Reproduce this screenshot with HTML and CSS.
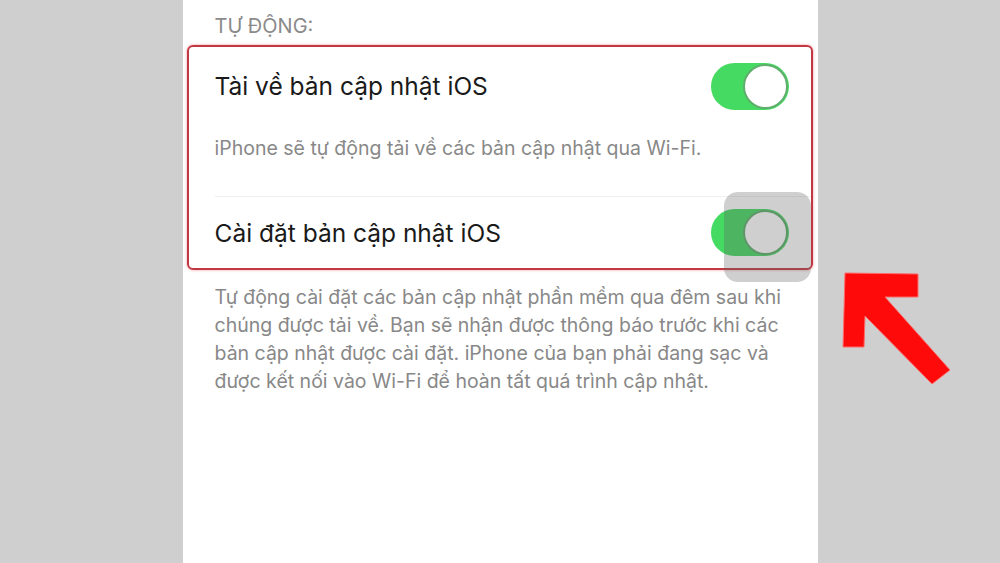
FILE: index.html
```html
<!DOCTYPE html>
<html lang="vi">
<head>
  <meta charset="utf-8">
  <meta name="viewport" content="width=device-width, initial-scale=1.0">
  <title>Cập nhật phần mềm</title>
  <link rel="stylesheet" href="styles.css">
</head>
<body>
    <div class="screen">
        <p class="section-header">TỰ ĐỘNG:</p>
        <div class="group highlight">
            <div class="row">
                <span class="row-title">Tài về bản cập nhật iOS</span>
                <div class="switch on"><div class="knob"></div></div>
            </div>
            <p class="row-note">iPhone sẽ tự động tải về các bản cập nhật qua Wi-Fi.</p>
            <div class="separator"></div>
            <div class="row">
                <span class="row-title">Cài đặt bản cập nhật iOS</span>
                <div class="switch on pressed"><div class="knob"></div></div>
            </div>
        </div>
        <p class="section-footer">Tự động cài đặt các bản cập nhật phần mềm qua đêm sau khi chúng được tải về. Bạn sẽ nhận được thông báo trước khi các bản cập nhật được cài đặt. iPhone của bạn phải đang sạc và được kết nối vào Wi-Fi để hoàn tất quá trình cập nhật.</p>
    </div>

    <!-- pointer arrow next to the screen -->
    <svg class="arrow" width="120" height="120" viewBox="0 0 120 120">
        <polygon points="5,3 78,4 78,27 45,27 110,100 92,114 25,46 24,77 3,77"
                 fill="#ff0a0a" stroke="#ff6b6b" stroke-width="1"/>
    </svg>
</body>
</html>
```

FILE: styles.css
```css
* {
    box-sizing: border-box;
}
body {
    margin: 0;
    height: 563px;
    overflow: hidden;
    background-color: #cfcfcf;
    font-family: "Inter", "Liberation Sans", sans-serif;
}
p {
    margin: 0;
}
.screen {
    width: 635px;
    height: 563px;
    margin: 0 auto;
    background-color: #fff;
}

/* Section text */
.section-header {
    padding: 15px 0 0 32px;
    font-size: 20px;
    line-height: 22px;
    color: #8a8a8a;
    margin-bottom: 8px;
}
.section-footer {
    margin-top: 13px;
    padding: 0 22px 0 32px;
    font-size: 19.5px;
    line-height: 28px;
    color: #888;
}

/* Grouped rows */
.group {
    margin: 0 5px 0 4px;
}
.highlight {
    border: 2px solid #c23842;
    border-radius: 6px;
    box-shadow: 0 0 3px rgba(235, 110, 120, 0.7);
}
.row {
    display: flex;
    align-items: center;
    justify-content: space-between;
    height: 78px;
    padding: 0 22px 0 26px;
}
.row:last-child {
    height: 71px;
}
.row-title {
    font-size: 24.5px;
    color: #1a1a1a;
}
.row-note {
    padding: 12px 0 37px 26px;
    font-size: 19.5px;
    line-height: 22px;
    color: #888;
}
.separator {
    height: 1px;
    margin-left: 26px;
    background-color: #efefef;
}

/* Switch */
.switch {
    position: relative;
    display: flex;
    justify-content: flex-end;
    align-items: center;
    width: 78px;
    height: 47px;
    border-radius: 24px;
    padding: 1px;
    background-color: #e5e5ea;
}
.switch.on {
    background-color: #45da62;
}
.knob {
    width: 45px;
    height: 45px;
    border-radius: 50%;
    background-color: #fff;
    border: 2px solid #5fae6c;
}
.switch.pressed::after {
    content: "";
    position: absolute;
    left: 13px;
    top: -17px;
    width: 87px;
    height: 90px;
    border-radius: 14px;
    background-color: rgba(95, 95, 95, 0.3);
}

.arrow {
    position: absolute;
    left: 840px;
    top: 270px;
}
```
